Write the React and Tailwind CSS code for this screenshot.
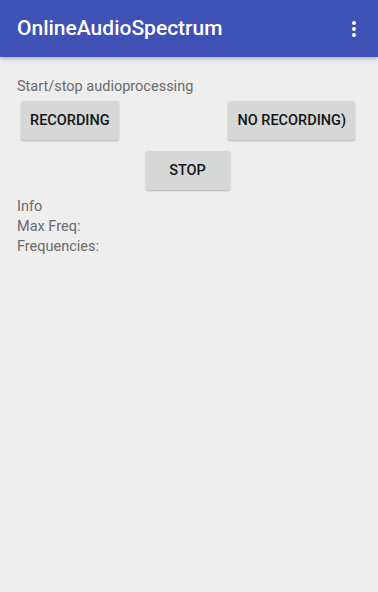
export default function App() {
  const btn =
    'bg-[#d6d7d7] rounded-[2px] shadow-[0_1px_2px_rgba(0,0,0,0.25)] text-[14.5px] font-medium text-[#151515] uppercase h-[39px] px-[9px]';

  return (
    <div className="w-[378px] h-[592px] bg-[#eeeeee] font-['Roboto',sans-serif] overflow-hidden">
      <header className="h-[57px] bg-[#3f51b5] flex items-center justify-between pl-[17px] pr-[22px] shadow-[0_2px_4px_rgba(0,0,0,0.25)] relative">
        <h1 className="text-white text-[21px] font-medium">OnlineAudioSpectrum</h1>
        <div className="flex flex-col gap-[2px]">
          <span className="w-[4px] h-[4px] rounded-full bg-white" />
          <span className="w-[4px] h-[4px] rounded-full bg-white" />
          <span className="w-[4px] h-[4px] rounded-full bg-white" />
        </div>
      </header>

      <main className="px-[17px] pt-[20px]">
        <p className="text-[14.5px] leading-[20px] text-[#6a6a6a]">Start/stop audioprocessing</p>

        <div className="flex justify-between pl-[4px] pr-[6px] mt-[4px]">
          <button className={btn}>Recording</button>
          <button className={btn}>No recording)</button>
        </div>

        <div className="flex justify-center mt-[11px] pr-[3px]">
          <button className={`${btn} w-[84px]`}>Stop</button>
        </div>

        <div className="mt-[7px] text-[14.5px] leading-[20px] text-[#6a6a6a]">
          <div>Info</div>
          <div>Max Freq:</div>
          <div>Frequencies:</div>
        </div>
      </main>
    </div>
  );
}
